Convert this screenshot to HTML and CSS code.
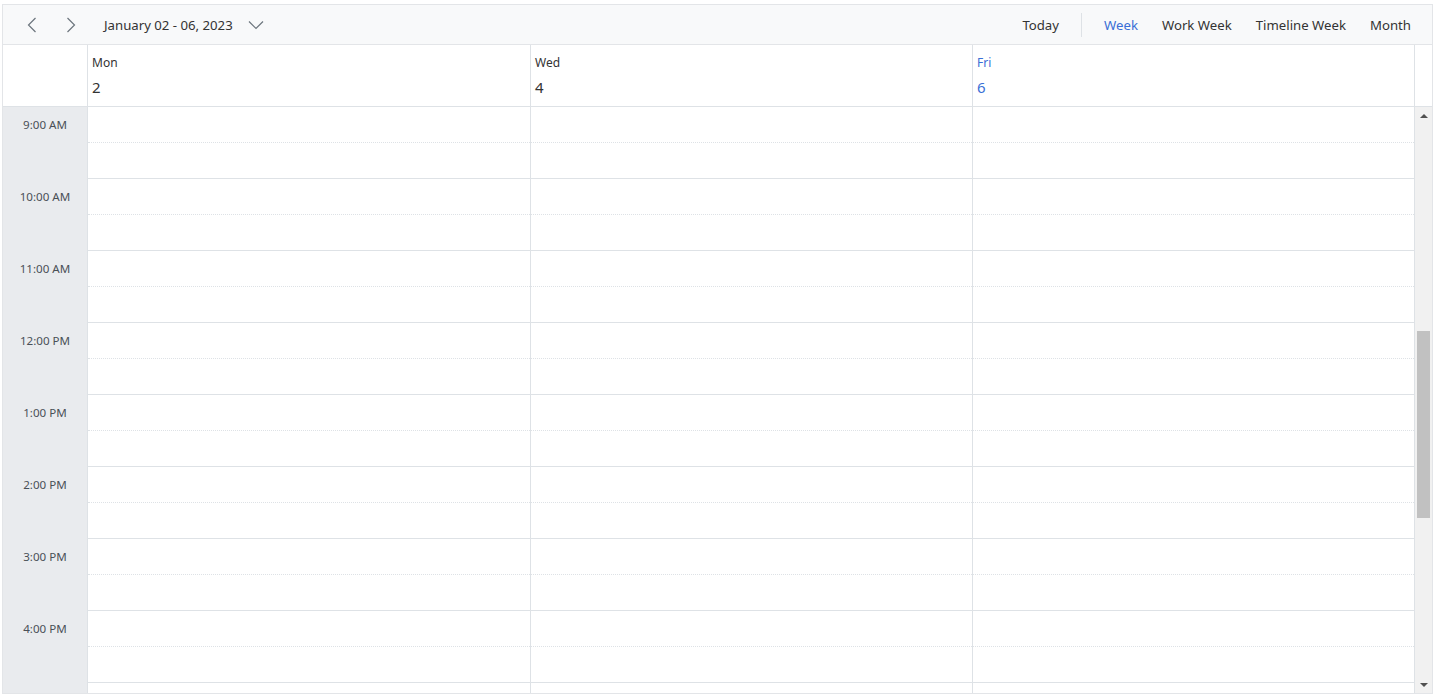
FILE: index.html
```html
<!DOCTYPE html>
<html lang="en">
<head>
    <meta charset="UTF-8">
    <meta name="viewport" content="width=device-width, initial-scale=1.0">
    <title>Scheduler - Week</title>
    <link rel="stylesheet" href="styles.css">
</head>
<body>
    <div class="scheduler">
        <!-- Toolbar -->
        <div class="toolbar">
            <div class="toolbar-left">
                <button class="icon-btn" title="Previous">
                    <svg width="10" height="16" viewBox="0 0 10 16"><path d="M8.5 1 L1.5 8 L8.5 15" fill="none" stroke="#6c757d" stroke-width="1.2"/></svg>
                </button>
                <button class="icon-btn" title="Next">
                    <svg width="10" height="16" viewBox="0 0 10 16"><path d="M1.5 1 L8.5 8 L1.5 15" fill="none" stroke="#6c757d" stroke-width="1.2"/></svg>
                </button>
                <button class="date-btn">
                    <span>January 02 - 06, 2023</span>
                    <svg width="16" height="10" viewBox="0 0 16 10"><path d="M1 1.5 L8 8.5 L15 1.5" fill="none" stroke="#6c757d" stroke-width="1.2"/></svg>
                </button>
            </div>
            <div class="toolbar-right">
                <button class="view-btn">Today</button>
                <span class="separator"></span>
                <button class="view-btn active">Week</button>
                <button class="view-btn">Work Week</button>
                <button class="view-btn">Timeline Week</button>
                <button class="view-btn">Month</button>
            </div>
        </div>

        <!-- Day header -->
        <div class="header-row">
            <div class="corner"></div>
            <div class="day-head">
                <div class="day-name">Mon</div>
                <div class="day-date">2</div>
            </div>
            <div class="day-head">
                <div class="day-name">Wed</div>
                <div class="day-date">4</div>
            </div>
            <div class="day-head today">
                <div class="day-name">Fri</div>
                <div class="day-date">6</div>
            </div>
            <div class="head-gutter"></div>
        </div>

        <!-- Time grid -->
        <div class="body-row">
            <div class="scroll-area">
                <div class="grid">
                    <div class="time-col" id="timeCol"></div>
                    <div class="day-col"></div>
                    <div class="day-col"></div>
                    <div class="day-col"></div>
                </div>
            </div>
            <div class="scrollbar">
                <div class="sb-btn"><span class="arrow-up"></span></div>
                <div class="sb-track" id="track">
                    <div class="sb-thumb" id="thumb"></div>
                </div>
                <div class="sb-btn"><span class="arrow-down"></span></div>
            </div>
        </div>
    </div>

    <script>
        const SLOT = 36;
        const START = 9;   // first visible hour
        const END = 17;    // last (partly visible) hour

        function label(h) {
            const suffix = h < 12 ? 'AM' : 'PM';
            const hour = h % 12 === 0 ? 12 : h % 12;
            return hour + ':00 ' + suffix;
        }

        // time labels
        const timeCol = document.getElementById('timeCol');
        for (let h = START; h <= END; h++) {
            const cell = document.createElement('div');
            cell.className = 'time-cell';
            if (h < END) cell.innerHTML = '<span>' + label(h) + '</span>';
            timeCol.appendChild(cell);
        }

        // half hour slots
        document.querySelectorAll('.day-col').forEach(col => {
            for (let i = START * 2; i < (END + 1) * 2; i++) {
                const slot = document.createElement('div');
                slot.className = i % 2 === 0 ? 'slot half' : 'slot';
                col.appendChild(slot);
            }
        });

        // scrollbar thumb for a full 24h day scrolled to 9 AM
        const track = document.getElementById('track');
        const thumb = document.getElementById('thumb');
        const dayHeight = 24 * 2 * SLOT;
        const viewHeight = document.querySelector('.scroll-area').clientHeight;
        thumb.style.height = (track.clientHeight * viewHeight / dayHeight) + 'px';
        thumb.style.marginTop = (track.clientHeight * START * 2 * SLOT / dayHeight) + 'px';
    </script>
</body>
</html>
```

FILE: styles.css
```css
* {
    margin: 0;
    padding: 0;
    box-sizing: border-box;
}

body {
    font-family: "Noto Sans", "Open Sans", Arial, sans-serif;
    color: #333;
    background-color: white;
    overflow: hidden;
}

button {
    font-family: inherit;
    background: none;
    border: none;
    cursor: pointer;
}

.scheduler {
    margin: 4px 0 0 2px;
    height: 690px;
    border: 1px solid #e3e5e8;
    display: flex;
    flex-direction: column;
}

/* Toolbar */
.toolbar {
    height: 40px;
    flex-shrink: 0;
    background-color: #f8f9fa;
    border-bottom: 1px solid #e3e5e8;
    display: flex;
    align-items: center;
    justify-content: space-between;
    padding: 0 9px 0 9px;
}

.toolbar-left,
.toolbar-right {
    display: flex;
    align-items: center;
    height: 100%;
}

.icon-btn {
    width: 39px;
    height: 32px;
    display: flex;
    align-items: center;
    justify-content: center;
}

.date-btn {
    display: flex;
    align-items: center;
    gap: 15px;
    padding-left: 14px;
    font-size: 13.2px;
    color: #333;
    height: 32px;
}

.view-btn {
    font-size: 13.2px;
    color: #333;
    padding: 0 12px;
    height: 32px;
}

.view-btn.active {
    color: #3a6fd6;
}

.separator {
    width: 1px;
    height: 24px;
    background-color: #dee2e6;
    margin: 0 10px;
}

/* Header */
.header-row {
    display: flex;
    height: 62px;
    flex-shrink: 0;
    border-bottom: 1px solid #dee2e6;
}

.corner {
    width: 85px;
    border-right: 1px solid #dee2e6;
    flex-shrink: 0;
}

.day-head {
    border-right: 1px solid #dee2e6;
    padding: 9px 0 0 4px;
}

.day-name {
    font-size: 12px;
    line-height: 18px;
    color: #333;
}

.day-date {
    font-size: 15px;
    line-height: 20px;
    margin-top: 5px;
    color: #333;
}

.today .day-name,
.today .day-date {
    color: #3a6fd6;
}

.head-gutter {
    width: 17px;
    flex-shrink: 0;
}

/* Day column widths, shared by header and grid */
.day-head:nth-child(2),
.day-col:nth-child(2) {
    flex: 0 0 443px;
}

.day-head:nth-child(3),
.day-col:nth-child(3) {
    flex: 0 0 442px;
}

.day-head:nth-child(4),
.day-col:nth-child(4) {
    flex: 1;
}

/* Body */
.body-row {
    flex: 1;
    display: flex;
    min-height: 0;
}

.scroll-area {
    flex: 1;
    overflow: hidden;
}

.grid {
    display: flex;
}

.time-col {
    width: 85px;
    flex-shrink: 0;
    background-color: #e9ebee;
    border-right: 1px solid #dee2e6;
}

.time-cell {
    height: 72px;
}

.time-cell span {
    display: flex;
    height: 35px;
    align-items: center;
    justify-content: center;
    font-size: 11.6px;
    color: #495057;
}

.day-col {
    border-right: 1px solid #dee2e6;
}

.slot {
    height: 36px;
    border-bottom: 1px solid #dee2e6;
}

.slot.half {
    border-bottom: 1px dotted #dee2e6;
}

/* Scrollbar */
.scrollbar {
    width: 17px;
    flex-shrink: 0;
    background-color: #f1f1f1;
    display: flex;
    flex-direction: column;
}

.sb-btn {
    height: 17px;
    display: flex;
    align-items: center;
    justify-content: center;
}

.arrow-up {
    border-left: 4px solid transparent;
    border-right: 4px solid transparent;
    border-bottom: 4px solid #505050;
}

.arrow-down {
    border-left: 4px solid transparent;
    border-right: 4px solid transparent;
    border-top: 4px solid #505050;
}

.sb-track {
    flex: 1;
    padding: 0 2px;
}

.sb-thumb {
    background-color: #c1c1c1;
}
```
